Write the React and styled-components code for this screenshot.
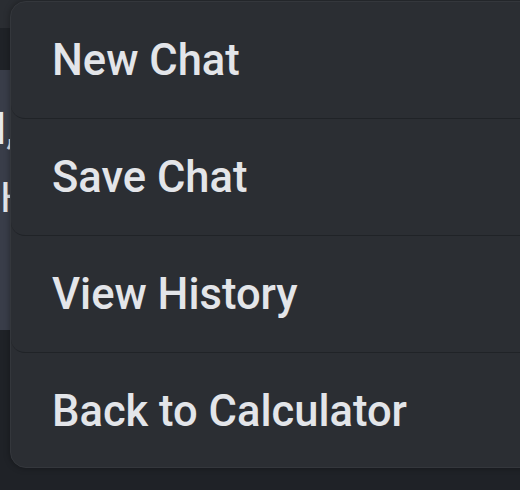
import React from "react";
import styled, { createGlobalStyle } from "styled-components";

const GlobalStyle = createGlobalStyle`
  html, body {
    margin: 0;
    padding: 0;
    background: #1f2227;
    overflow: hidden;
  }
  #root {
    width: 520px;
    height: 490px;
    position: relative;
    overflow: hidden;
    font-family: Roboto, "Noto Sans", sans-serif;
  }
`;

const Screen = styled.div`
  display: flex;
  flex-direction: column;
  height: 490px;
  background: #1f2227;
`;

const TopBar = styled.div`
  height: 28px;
  background: #2a2d32;
`;

const SubBar = styled.div`
  height: 42px;
  background: #1f2227;
`;

const Bubble = styled.div`
  height: 260px;
  width: 200px;
  background: #393d49;
  color: #e6e8ec;
  font-size: 42px;
  line-height: 68px;
  padding-top: 26px;
  box-sizing: border-box;
  margin-left: -4px;
`;

const Line = styled.div`
  padding-left: ${(p) => p.$indent || 0}px;
`;

const Menu = styled.div`
  position: absolute;
  left: 10px;
  top: 1px;
  width: 540px;
  height: 467px;
  box-sizing: border-box;
  background: #2b2e33;
  border: 1px solid #34373c;
  border-radius: 16px;
  box-shadow: 0 0 6px rgba(0, 0, 0, 0.35);
  display: flex;
  flex-direction: column;
  overflow: hidden;
`;

const Item = styled.div`
  height: 117px;
  flex-shrink: 0;
  box-sizing: border-box;
  display: flex;
  align-items: center;
  padding-left: 41px;
  font-size: 43.5px;
  font-weight: 500;
  color: #e3e5e9;
  border-bottom: ${(p) => (p.$last ? "none" : "1px solid #202327")};
  border-radius: 14px;
`;

const items = ["New Chat", "Save Chat", "View History", "Back to Calculator"];

export default function App() {
  return (
    <>
      <GlobalStyle />
      <Screen>
        <TopBar />
        <SubBar />
        <Bubble>
          <Line>l,</Line>
          <Line $indent={4}>H</Line>
        </Bubble>
      </Screen>
      <Menu>
        {items.map((label, i) => (
          <Item key={label} $last={i === items.length - 1}>
            {label}
          </Item>
        ))}
      </Menu>
    </>
  );
}
